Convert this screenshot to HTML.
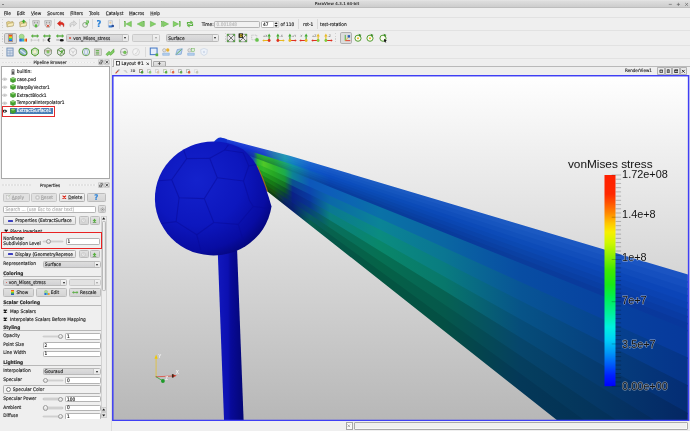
<!DOCTYPE html><html><head><meta charset="utf-8"><title>ParaView 4.3.1 64-bit</title><style>
*{box-sizing:border-box}
html,body{margin:0;padding:0}
body{width:690px;height:431px;overflow:hidden;background:#efefef;position:relative;
 font-family:"DejaVu Sans","Liberation Sans",sans-serif;font-size:4.3px;color:#262626;line-height:5px}
.a{position:absolute}
.t{position:absolute;white-space:nowrap;line-height:5px;height:5px;-webkit-text-stroke:0.14px currentColor;transform:scaleY(1.12);transform-origin:0 58%}
u{text-decoration:none;background:linear-gradient(#555,#555) no-repeat 0 4.45px / 100% 0.3px}
.b{font-weight:bold}
.hl{position:absolute;left:0;width:690px;height:1px;background:#fafafa;border-top:0.4px solid #e2e2e2}
.btn{position:absolute;border:0.5px solid #b2b2b2;border-radius:1.3px;background:linear-gradient(#f5f5f5,#e4e4e4)}
.btn.d{background:#e1e1e1;border-color:#c6c6c6}
.btn.g{background:linear-gradient(#e0e0e0,#d4d4d4);border-color:#bcbcbc}
.inp{position:absolute;border:1px solid #b4b4b4;border-radius:1.2px;background:#fff}
.cmb{position:absolute;border:1px solid #bababa;border-radius:1.4px;background:linear-gradient(#dddddd,#d2d2d4);overflow:hidden}
.cmb i{position:absolute;right:1.6px;z-index:1;top:50%;margin-top:-0.9px;border-left:1.6px solid transparent;border-right:1.6px solid transparent;border-top:2px solid #1c1c1c}
.cmb b{position:absolute;right:0;top:0;bottom:0;width:6.2px;background:linear-gradient(#f2f2f2,#e6e6e6);border-left:1px solid #c8c8c8}
.sl{position:absolute;height:1.6px;background:#cfcfcf;border-radius:1px;box-shadow:0 0 0 0.3px #b8b8b8}
.kn{position:absolute;width:5px;height:5.2px;border:1px solid #9c9c9c;border-radius:2.6px;background:linear-gradient(#fafafa,#d8d8d8)}
.ul{position:absolute;height:0.6px;background:#b8b8b8;left:3px;width:97.5px}
.cb{position:absolute;width:4.4px;height:4.4px}
</style></head><body><div id="w" style="position:absolute;left:0;top:0;width:690px;height:431px;will-change:transform">
<div class="a" style="left:0;top:0;width:690px;height:8.4px;background:linear-gradient(#e9e9e9 0,#dedede 12%,#cdcdcd 100%);border-bottom:0.5px solid #bdbdbd"></div>
<div class="t b" style="left:314.7px;top:1.7px;font-size:3.68px;color:#3c3c3c;-webkit-text-stroke:0">ParaView 4.3.1 64-bit</div>
<div class="a" style="left:2px;top:3.6px;border-left:1.2px solid transparent;border-right:1.2px solid transparent;border-top:1.5px solid #333"></div>
<svg class="a" style="left:666px;top:1px" width="24" height="7" viewBox="666 1 24 7"><path d="M668.8,4.4 h3 M676.8,4.4 h3.2 M678.4,2.8 v3.2 M685.2,3 L688,5.8 M688,3 L685.2,5.8" stroke="#5a5a5a" stroke-width="0.6" fill="none"/></svg>
<div class="t" style="left:3.7px;top:10.6px"><u>F</u>ile</div>
<div class="t" style="left:16.7px;top:10.6px"><u>E</u>dit</div>
<div class="t" style="left:31px;top:10.6px"><u>V</u>iew</div>
<div class="t" style="left:47.3px;top:10.6px"><u>S</u>ources</div>
<div class="t" style="left:70.2px;top:10.6px"><u>F</u>ilters</div>
<div class="t" style="left:89px;top:10.6px"><u>T</u>ools</div>
<div class="t" style="left:105.7px;top:10.6px"><u>C</u>atalyst</div>
<div class="t" style="left:129px;top:10.6px"><u>M</u>acros</div>
<div class="t" style="left:150.3px;top:10.6px"><u>H</u>elp</div>
<div class="hl" style="top:16.6px"></div>
<div class="hl" style="top:30.2px"></div>
<div class="hl" style="top:44.7px"></div>
<div class="hl" style="top:58.1px"></div>
<div class="a" style="left:1.6px;top:19.2px;width:1px;height:10.0px;background:repeating-linear-gradient(#d0d0d0 0,#d0d0d0 0.7px,transparent 0.7px,transparent 1.6px)"></div>
<div class="a" style="left:1.6px;top:33.2px;width:1px;height:10.0px;background:repeating-linear-gradient(#d0d0d0 0,#d0d0d0 0.7px,transparent 0.7px,transparent 1.6px)"></div>
<div class="a" style="left:1.6px;top:47.2px;width:1px;height:10.0px;background:repeating-linear-gradient(#d0d0d0 0,#d0d0d0 0.7px,transparent 0.7px,transparent 1.6px)"></div>
<svg class="a" style="left:5.40px;top:19.20px;overflow:visible" width="10" height="10" viewBox="-5.0 -5.0 10 10"><g transform="scale(1.1)"><path d="M-3.2,-1.6 L-1.2,-2.4 L0.2,-1.8 L2.6,-2.2 L3,1.6 L-2.6,2.6 Z" fill="#e8d38a" stroke="#9a8a55" stroke-width="0.45"/><path d="M-2.8,2.5 L-1.6,-0.4 L3.6,-1.2 L2.8,1.7 Z" fill="#f7ecbb" stroke="#a89860" stroke-width="0.4"/></g></svg>
<svg class="a" style="left:17.60px;top:19.20px;overflow:visible" width="10" height="10" viewBox="-5.0 -5.0 10 10"><g transform="scale(1.1)"><path d="M-3.2,-1.6 L-1.2,-2.4 L0.2,-1.8 L2.6,-2.2 L3,1.6 L-2.6,2.6 Z" fill="#e8d38a" stroke="#9a8a55" stroke-width="0.45"/><path d="M-2.8,2.5 L-1.6,-0.4 L3.6,-1.2 L2.8,1.7 Z" fill="#f7ecbb" stroke="#a89860" stroke-width="0.4"/><path d="M0.6,-4.2 L2.6,-2 L1.3,-2 L1.3,-0.6 L-0.1,-0.6 L-0.1,-2 L-1.4,-2 Z" fill="#3faa2c"/></g></svg>
<div class="a" style="left:28.8px;top:19.2px;width:0.5px;height:10.0px;background:#dadada"></div>
<svg class="a" style="left:30.60px;top:19.20px;overflow:visible" width="10" height="10" viewBox="-5.0 -5.0 10 10"><g transform="scale(1.1)"><path d="M-3,-3 L3,-3 L2.6,1.4 L0,3.4 L-2.6,1.4 Z" fill="#e3e3e3" stroke="#8a8a8a" stroke-width="0.5"/><path d="M-1.8,-2 h1.2 v1.6 h-1.2z M0.6,-2 h1.2 v1.6 h-1.2z" fill="#9d9d9d"/><circle cx="0" cy="1.6" r="1.3" fill="#55b83a"/></g></svg>
<svg class="a" style="left:43.00px;top:19.20px;overflow:visible" width="10" height="10" viewBox="-5.0 -5.0 10 10"><g transform="scale(1.1)"><path d="M-3,-3 L3,-3 L2.6,1.4 L0,3.4 L-2.6,1.4 Z" fill="#e3e3e3" stroke="#8a8a8a" stroke-width="0.5"/><path d="M-1.8,-2 h1.2 v1.6 h-1.2z M0.6,-2 h1.2 v1.6 h-1.2z" fill="#9d9d9d"/><path d="M-1.3,0.6 L1.3,2.8 M1.3,0.6 L-1.3,2.8" stroke="#d8391f" stroke-width="0.8"/></g></svg>
<div class="a" style="left:54.2px;top:19.2px;width:0.5px;height:10.0px;background:#dadada"></div>
<svg class="a" style="left:55.50px;top:19.20px;overflow:visible" width="10" height="10" viewBox="-5.0 -5.0 10 10"><g transform="scale(1.1)"><path d="M-3.4,-0.4 L-0.6,-3 L-0.6,-1.6 C2.6,-2 3.6,0.6 2.2,2.8 C2.4,1 1.4,0.2 -0.6,0.6 L-0.6,2 Z" fill="#e0281c" stroke="#a81a12" stroke-width="0.3"/></g></svg>
<svg class="a" style="left:67.70px;top:19.20px;overflow:visible" width="10" height="10" viewBox="-5.0 -5.0 10 10"><g transform="scale(1.1)"><path d="M3.4,-0.4 L0.6,-3 L0.6,-1.6 C-2.6,-2 -3.6,0.6 -2.2,2.8 C-2.4,1 -1.4,0.2 0.6,0.6 L0.6,2 Z" fill="#dcdcdc" stroke="#a9a9a9" stroke-width="0.4"/></g></svg>
<div class="a" style="left:79px;top:19.2px;width:0.5px;height:10.0px;background:#dadada"></div>
<svg class="a" style="left:80.80px;top:19.20px;overflow:visible" width="10" height="10" viewBox="-5.0 -5.0 10 10"><g transform="scale(1.1)"><circle cx="-0.8" cy="0.8" r="2.2" fill="none" stroke="#7d8f74" stroke-width="0.7"/><path d="M0,-3.2 h2.6 v2.6 h-1 v-1.6 h-1.6z" fill="#4fb23a"/><path d="M-0.4,-1.4 h2 v2 h-2z" fill="#58b944"/></g></svg>
<div class="a" style="left:92.2px;top:19.2px;width:0.5px;height:10.0px;background:#dadada"></div>
<div class="t b" style="left:96.6px;top:20.0px;font-size:8.4px;line-height:8.4px;height:8.4px;color:#2d82d6">?</div>
<svg class="a" style="left:105.70px;top:19.20px;overflow:visible" width="10" height="10" viewBox="-5.0 -5.0 10 10"><g transform="scale(1.1)"><path d="M-2.4,-3 h3.6 v4.6 h-3.6z" fill="#e8eef6" stroke="#8d9bb0" stroke-width="0.4"/><circle cx="-0.6" cy="-1.2" r="1" fill="#e7c89a"/><path d="M-2.2,1.4 h3.2 v1.8 h-3.2z" fill="#3f7fd0"/><circle cx="1.6" cy="1.8" r="1.2" fill="#2b4f9b"/></g></svg>
<div class="a" style="left:119.4px;top:19.2px;width:0.5px;height:10.0px;background:#dadada"></div>
<svg class="a" style="left:123.40px;top:19.20px;overflow:visible" width="10" height="10" viewBox="-5.0 -5.0 10 10"><g transform="scale(1)"><rect x="-3.55" y="-2.7" width="1.1" height="5.4" fill="#86d268" stroke="#4a9e32" stroke-width="0.35"/><path d="M3.4,-2.7 L-2,0 L3.4,2.7 Z" fill="#86d268" stroke="#4a9e32" stroke-width="0.4"/></g></svg>
<svg class="a" style="left:136.40px;top:19.20px;overflow:visible" width="10" height="10" viewBox="-5.0 -5.0 10 10"><g transform="scale(1)"><path d="M1.6,-2.7 L-3.8,0 L1.6,2.7 Z" fill="#86d268" stroke="#4a9e32" stroke-width="0.4"/><rect x="2.25" y="-2.7" width="1.1" height="5.4" fill="#86d268" stroke="#4a9e32" stroke-width="0.35"/></g></svg>
<svg class="a" style="left:148.10px;top:19.20px;overflow:visible" width="10" height="10" viewBox="-5.0 -5.0 10 10"><g transform="scale(1)"><path d="M-2.6,-2.7 L2.8,0 L-2.6,2.7 Z" fill="#86d268" stroke="#4a9e32" stroke-width="0.4"/></g></svg>
<svg class="a" style="left:160.20px;top:19.20px;overflow:visible" width="10" height="10" viewBox="-5.0 -5.0 10 10"><g transform="scale(1)"><rect x="-3.55" y="-2.7" width="1.1" height="5.4" fill="#86d268" stroke="#4a9e32" stroke-width="0.35"/><path d="M-1.8,-2.7 L3.6,0 L-1.8,2.7 Z" fill="#86d268" stroke="#4a9e32" stroke-width="0.4"/></g></svg>
<svg class="a" style="left:172.40px;top:19.20px;overflow:visible" width="10" height="10" viewBox="-5.0 -5.0 10 10"><g transform="scale(1)"><path d="M-3.8,-2.7 L1.6,0 L-3.8,2.7 Z" fill="#86d268" stroke="#4a9e32" stroke-width="0.4"/><rect x="2.25" y="-2.7" width="1.1" height="5.4" fill="#86d268" stroke="#4a9e32" stroke-width="0.35"/></g></svg>
<svg class="a" style="left:184.60px;top:19.20px;overflow:visible" width="10" height="10" viewBox="-5.0 -5.0 10 10"><g transform="scale(1)"><path d="M-2.5,0.6 V-1.5 H0.8 M2.5,-0.6 V1.5 H-0.8" fill="none" stroke="#5cb244" stroke-width="1.2"/><path d="M0.6,-3.2 L3,-1.5 L0.6,0.2Z M-0.6,3.2 L-3,1.5 L-0.6,-0.2Z" fill="#6cc24e" stroke="#4a9e32" stroke-width="0.3"/></g></svg>
<div class="t" style="left:201.7px;top:21.599999999999998px">Time:</div>
<div class="inp" style="left:214.3px;top:20.6px;width:45.4px;height:7px;background:#f1f1f1;border-color:#b4b4b4"></div>
<div class="t" style="left:216.6px;top:21.599999999999998px;color:#b9b9b9">0.001848</div>
<div class="inp" style="left:260.9px;top:20.6px;width:18.6px;height:7px"></div>
<div class="t" style="left:263px;top:21.599999999999998px">47</div>
<svg class="a" style="left:273.4px;top:20.6px" width="6.2" height="7" viewBox="0 0 6.2 7"><rect x="0.3" y="0.3" width="5.6" height="6.4" rx="1" fill="#ececec" stroke="#b9b9b9" stroke-width="0.5"/><path d="M3.1,1.2 L4.7,3 L1.5,3Z M3.1,5.9 L4.7,4.1 L1.5,4.1Z" fill="#1a1a1a"/></svg>
<div class="a" style="left:297.6px;top:19.2px;width:0.5px;height:10.0px;background:#dadada"></div>
<div class="a" style="left:316.5px;top:19.2px;width:0.5px;height:10.0px;background:#dadada"></div>
<div class="t" style="left:280.6px;top:21.599999999999998px">of 110</div>
<div class="t" style="left:303px;top:21.599999999999998px">rot-1</div>
<div class="t" style="left:320px;top:21.599999999999998px">test-rotation</div>
<div class="a" style="left:4.2px;top:32.6px;width:12.5px;height:11.2px;border:0.5px solid #b0b0b0;border-radius:1.8px;background:#dcdcdc"></div>
<div class="a" style="left:7.6px;top:34px;width:5.8px;height:8.4px;border:0.3px solid #b09a8a;background:linear-gradient(#ee2a1a 0,#f27a1a 18%,#f4e020 36%,#58d040 54%,#22bce0 72%,#2248e0 100%)"></div>
<svg class="a" style="left:17.60px;top:33.20px;overflow:visible" width="10" height="10" viewBox="-5.0 -5.0 10 10"><g transform="scale(1.1)"><circle cx="-1.2" cy="-1.2" r="2.3" fill="#a6dc8e" stroke="#6faa5a" stroke-width="0.4"/><rect x="-3.4" y="0.6" width="2.4" height="2.6" fill="#2a6fd6"/><rect x="-1" y="0.6" width="2.2" height="2.6" fill="#36b0c8"/><rect x="1.2" y="0.6" width="2.2" height="2.6" fill="#f0a028"/><rect x="2.6" y="0.6" width="1" height="2.6" fill="#e03a20"/></g></svg>
<svg class="a" style="left:29.80px;top:33.20px;overflow:visible" width="10" height="10" viewBox="-5.0 -5.0 10 10"><g transform="scale(1.1)"><path d="M-3.6,-1.8 L-1.8,-3.2 L-1.8,-2.3 L1.8,-2.3 L1.8,-3.2 L3.6,-1.8 L1.8,-0.4 L1.8,-1.3 L-1.8,-1.3 L-1.8,-0.4 Z" fill="#5cb940" stroke="#3c8a27" stroke-width="0.25"/><path d="M-3.4,0.8 v2.4 M3.4,0.8 v2.4 M-2.4,2 h1 M-0.6,2 h1.2 M1.4,2 h1" stroke="#8c8c8c" stroke-width="0.5" fill="none"/></g></svg>
<svg class="a" style="left:42.30px;top:33.20px;overflow:visible" width="10" height="10" viewBox="-5.0 -5.0 10 10"><g transform="scale(1.1)"><path d="M-3.6,-1.8 L-1.8,-3.2 L-1.8,-2.3 L1.8,-2.3 L1.8,-3.2 L3.6,-1.8 L1.8,-0.4 L1.8,-1.3 L-1.8,-1.3 L-1.8,-0.4 Z" fill="#5cb940" stroke="#3c8a27" stroke-width="0.25"/><path d="M-3.4,0.8 v2.4 M-2.4,2 h1" stroke="#8c8c8c" stroke-width="0.5" fill="none"/><path d="M3,0 C0.4,0.2 0,3 2.6,3.4 C1.4,2.6 1.6,1 3,0Z" fill="#111" stroke="#111" stroke-width="0.7"/></g></svg>
<svg class="a" style="left:54.90px;top:33.20px;overflow:visible" width="10" height="10" viewBox="-5.0 -5.0 10 10"><g transform="scale(1.1)"><path d="M-3.6,-1.8 L-1.8,-3.2 L-1.8,-2.3 L1.8,-2.3 L1.8,-3.2 L3.6,-1.8 L1.8,-0.4 L1.8,-1.3 L-1.8,-1.3 L-1.8,-0.4 Z" fill="#5cb940" stroke="#3c8a27" stroke-width="0.25"/><path d="M-3.4,1.8 h3" stroke="#555" stroke-width="0.5"/><ellipse cx="1.6" cy="2" rx="1.9" ry="1.2" fill="#161616"/></g></svg>
<div class="cmb" style="left:65.7px;top:33.6px;width:63.4px;height:8.8px"><b></b><i></i></div>
<div class="a" style="left:69.3px;top:37.300000000000004px;width:1.8px;height:1.8px;border-radius:1px;background:#d64a3a"></div>
<div class="t" style="left:73.2px;top:35.6px">von_Mises_stress</div>
<div class="cmb" style="left:131.7px;top:33.6px;width:27.9px;height:8.8px;border-color:#cacaca;background:#e2e2e2"><b></b><i style="border-top-color:#999"></i></div>
<div class="cmb" style="left:165.7px;top:33.6px;width:53.3px;height:8.8px"><b></b><i></i></div>
<div class="t" style="left:168.2px;top:35.6px">Surface</div>
<div class="a" style="left:225.2px;top:33.2px;width:1px;height:10.0px;background:repeating-linear-gradient(#d0d0d0 0,#d0d0d0 0.7px,transparent 0.7px,transparent 1.6px)"></div>
<svg class="a" style="left:225.80px;top:33.20px;overflow:visible" width="10" height="10" viewBox="-5.0 -5.0 10 10"><g transform="scale(1.2)"><rect x="-3.2" y="-3.2" width="6.4" height="6.4" fill="#e9e9e9" stroke="#7c7c7c" stroke-width="0.5"/><path d="M-3,-3 L3,3 M3,-3 L-3,3" stroke="#3a3a3a" stroke-width="0.55"/><path d="M-3,-3 h1.6 M-3,-3 v1.6 M3,3 h-1.6 M3,3 v-1.6 M3,-3 h-1.6 M3,-3 v1.6 M-3,3 h1.6 M-3,3 v-1.6" stroke="#4aa535" stroke-width="0.7"/></g></svg>
<svg class="a" style="left:238.00px;top:33.20px;overflow:visible" width="10" height="10" viewBox="-5.0 -5.0 10 10"><g transform="scale(1.2)"><rect x="-3.2" y="-3.2" width="6.4" height="6.4" fill="#e9e9e9" stroke="#7c7c7c" stroke-width="0.5"/><path d="M-3,-3 L3,3 M3,-3 L-3,3" stroke="#3a3a3a" stroke-width="0.55"/><path d="M-3,-3 h1.6 M-3,-3 v1.6 M3,3 h-1.6 M3,3 v-1.6 M3,-3 h-1.6 M3,-3 v1.6 M-3,3 h1.6 M-3,3 v-1.6" stroke="#4aa535" stroke-width="0.7"/><rect x="-3.6" y="-3.8" width="3.6" height="3.6" fill="#111"/><text x="-3" y="-0.9" font-size="3.2" font-weight="bold" fill="#f2d030" font-family="DejaVu Sans,sans-serif">D</text></g></svg>
<svg class="a" style="left:250.30px;top:33.20px;overflow:visible" width="10" height="10" viewBox="-5.0 -5.0 10 10"><g transform="scale(1.1)"><rect x="-3" y="-2.6" width="4.6" height="4.2" fill="none" stroke="#9c9c9c" stroke-width="0.45" stroke-dasharray="0.9 0.6"/><circle cx="1.8" cy="1.8" r="1.7" fill="#67c24d"/></g></svg>
<svg class="a" style="left:262.30px;top:33.20px;overflow:visible" width="10" height="10" viewBox="-5.0 -5.0 10 10"><g transform="scale(1.25)"><path d="M1.7,2 L1.7,-1.4" stroke="#3fa82c" stroke-width="0.9"/><path d="M1.7,-3.6 L3.0,-1.2 L0.3999999999999999,-1.2Z" fill="#3fa82c"/><path d="M1.7,2 L-2.5999999999999996,2" stroke="#e8b820" stroke-width="0.8"/><path d="M-3.8,2 L-2.3,1 L-2.3,3Z" fill="#e8b820"/><circle cx="1.7" cy="2" r="1.15" fill="#e03020"/><text x="-3.4" y="-1.2" font-size="2.5" fill="#555" font-family="DejaVu Sans,sans-serif">+X</text></g></svg>
<svg class="a" style="left:274.70px;top:33.20px;overflow:visible" width="10" height="10" viewBox="-5.0 -5.0 10 10"><g transform="scale(1.25)"><path d="M-1.7,2 L-1.7,-1.4" stroke="#3fa82c" stroke-width="0.9"/><path d="M-1.7,-3.6 L-0.3999999999999999,-1.2 L-3.0,-1.2Z" fill="#3fa82c"/><path d="M-1.7,2 L2.5999999999999996,2" stroke="#e8b820" stroke-width="0.8"/><path d="M3.8,2 L2.3,1 L2.3,3Z" fill="#e8b820"/><circle cx="-1.7" cy="2" r="1.15" fill="#e03020"/><text x="-0.2" y="-1.2" font-size="2.5" fill="#555" font-family="DejaVu Sans,sans-serif">-X</text></g></svg>
<svg class="a" style="left:286.70px;top:33.20px;overflow:visible" width="10" height="10" viewBox="-5.0 -5.0 10 10"><g transform="scale(1.25)"><path d="M-1.7,2 L-1.7,-1.4" stroke="#3fa82c" stroke-width="0.9"/><path d="M-1.7,-3.6 L-0.3999999999999999,-1.2 L-3.0,-1.2Z" fill="#3fa82c"/><path d="M-1.7,2 L2.5999999999999996,2" stroke="#e03020" stroke-width="0.8"/><path d="M3.8,2 L2.3,1 L2.3,3Z" fill="#e03020"/><circle cx="-1.7" cy="2" r="1.15" fill="#e8b820"/><text x="-0.2" y="-1.2" font-size="2.5" fill="#555" font-family="DejaVu Sans,sans-serif">+Y</text></g></svg>
<svg class="a" style="left:299.00px;top:33.20px;overflow:visible" width="10" height="10" viewBox="-5.0 -5.0 10 10"><g transform="scale(1.25)"><path d="M1.7,2 L1.7,-1.4" stroke="#3fa82c" stroke-width="0.9"/><path d="M1.7,-3.6 L3.0,-1.2 L0.3999999999999999,-1.2Z" fill="#3fa82c"/><path d="M1.7,2 L-2.5999999999999996,2" stroke="#e03020" stroke-width="0.8"/><path d="M-3.8,2 L-2.3,1 L-2.3,3Z" fill="#e03020"/><circle cx="1.7" cy="2" r="1.15" fill="#e8b820"/><text x="-3.4" y="-1.2" font-size="2.5" fill="#555" font-family="DejaVu Sans,sans-serif">-Y</text></g></svg>
<svg class="a" style="left:311.20px;top:33.20px;overflow:visible" width="10" height="10" viewBox="-5.0 -5.0 10 10"><g transform="scale(1.25)"><path d="M1.7,2 L1.7,-1.4" stroke="#e8b820" stroke-width="0.9"/><path d="M1.7,-3.6 L3.0,-1.2 L0.3999999999999999,-1.2Z" fill="#e8b820"/><path d="M1.7,2 L-2.5999999999999996,2" stroke="#e03020" stroke-width="0.8"/><path d="M-3.8,2 L-2.3,1 L-2.3,3Z" fill="#e03020"/><circle cx="1.7" cy="2" r="1.15" fill="#7ccc3c"/><text x="-3.4" y="-1.2" font-size="2.5" fill="#555" font-family="DejaVu Sans,sans-serif">+Z</text></g></svg>
<svg class="a" style="left:323.30px;top:33.20px;overflow:visible" width="10" height="10" viewBox="-5.0 -5.0 10 10"><g transform="scale(1.25)"><path d="M-1.7,2 L-1.7,-1.4" stroke="#e8b820" stroke-width="0.9"/><path d="M-1.7,-3.6 L-0.3999999999999999,-1.2 L-3.0,-1.2Z" fill="#e8b820"/><path d="M-1.7,2 L2.5999999999999996,2" stroke="#e03020" stroke-width="0.8"/><path d="M3.8,2 L2.3,1 L2.3,3Z" fill="#e03020"/><circle cx="-1.7" cy="2" r="1.15" fill="#7ccc3c"/><text x="-0.2" y="-1.2" font-size="2.5" fill="#555" font-family="DejaVu Sans,sans-serif">-Z</text></g></svg>
<div class="a" style="left:335.4px;top:33.2px;width:1px;height:10.0px;background:repeating-linear-gradient(#d0d0d0 0,#d0d0d0 0.7px,transparent 0.7px,transparent 1.6px)"></div>
<div class="a" style="left:340.4px;top:32.4px;width:11.3px;height:11.4px;border:0.5px solid #b0b0b0;border-radius:1.8px;background:#dcdcdc"></div>
<svg class="a" style="left:341.50px;top:33.20px;overflow:visible" width="10" height="10" viewBox="-5.0 -5.0 10 10"><g transform="scale(1.1)"><path d="M-1.6,2.4 L-1.6,-2.8" stroke="#3fa82c" stroke-width="0.8"/><path d="M-1.6,2.4 L3,2.4" stroke="#e03020" stroke-width="0.8"/><path d="M-1.6,2.4 L1.4,-0.8" stroke="#e8b820" stroke-width="0.8"/><rect x="0.6" y="-2.6" width="2.2" height="2.2" fill="#2c5fb8"/></g></svg>
<svg class="a" style="left:353.30px;top:33.20px;overflow:visible" width="10" height="10" viewBox="-5.0 -5.0 10 10"><g transform="scale(1.1)"><circle cx="0" cy="0.2" r="2.8" fill="#fbfbf0" stroke="#4f9a2e" stroke-width="0.9"/><circle cx="0" cy="0.2" r="0.9" fill="#e8b820"/><path d="M0.6,-3.8 L3.2,-2.8 L1.2,-1.2Z" fill="#3c8a27"/></g></svg>
<svg class="a" style="left:365.30px;top:33.20px;overflow:visible" width="10" height="10" viewBox="-5.0 -5.0 10 10"><g transform="scale(1.1)"><circle cx="0" cy="0.2" r="2.8" fill="#fbfbf0" stroke="#4f9a2e" stroke-width="0.9"/><circle cx="0" cy="0.2" r="0.9" fill="#e8b820"/><path d="M0.6,-3.8 L3.2,-2.8 L1.2,-1.2Z" fill="#3c8a27"/></g></svg>
<svg class="a" style="left:377.70px;top:33.20px;overflow:visible" width="10" height="10" viewBox="-5.0 -5.0 10 10"><g transform="scale(1.1)"><circle cx="0" cy="0.2" r="2.8" fill="#fbfbf0" stroke="#4f9a2e" stroke-width="0.9"/><path d="M0.6,-3.8 L3.2,-2.8 L1.2,-1.2Z" fill="#3c8a27"/><path d="M1,0.6 L3.6,2.6 L2.4,2.8 L3,4 L2.2,4.2 L1.7,3.1 L1,3.8Z" fill="#111"/></g></svg>
<svg class="a" style="left:5.40px;top:47.20px;overflow:visible" width="10" height="10" viewBox="-5.0 -5.0 10 10"><g transform="scale(1.1)"><rect x="-2.8" y="-3.6" width="5.6" height="7.2" fill="#d2dcea" stroke="#6f8db4" stroke-width="0.8"/><path d="M-2.6,-1.4 h5.2 M0,-1.4 v4.8 M-2.6,1 h5.2" stroke="#7f9cc0" stroke-width="0.5"/></g></svg>
<svg class="a" style="left:17.90px;top:47.20px;overflow:visible" width="10" height="10" viewBox="-5.0 -5.0 10 10"><g transform="scale(1.1)"><ellipse cx="0" cy="0" rx="3.9" ry="2.9" transform="rotate(35)" fill="#8bb0c8" stroke="#4f9a2e" stroke-width="1.1"/><path d="M-2.4,-1.8 L2.4,1.8" stroke="#d8e6f0" stroke-width="1.2"/></g></svg>
<svg class="a" style="left:30.30px;top:47.20px;overflow:visible" width="10" height="10" viewBox="-5.0 -5.0 10 10"><g transform="scale(1.1)"><path d="M0,-3.7 L3.2,-2 L3,1.8 L0,3.7 L-3,1.8 L-3.2,-2Z" fill="#d4e6cc" stroke="#4f9a2e" stroke-width="0.9"/><path d="M-3,-1.9 L0,-0.4 L3,-1.9 M0,-0.4 V3.5" stroke="#4f9a2e" stroke-width="0.4" fill="none" opacity="0.7"/><rect x="-1.4" y="-1.4" width="2.4" height="2.6" fill="#f5f1c8"/></g></svg>
<svg class="a" style="left:43.00px;top:47.20px;overflow:visible" width="10" height="10" viewBox="-5.0 -5.0 10 10"><g transform="scale(1.1)"><path d="M0,-3.7 L3.2,-2 L3,1.8 L0,3.7 L-3,1.8 L-3.2,-2Z" fill="#e4e4e4" stroke="#8a9a86" stroke-width="0.9"/><path d="M-3,-1.9 L0,-0.4 L3,-1.9 M0,-0.4 V3.5" stroke="#8a9a86" stroke-width="0.4" fill="none" opacity="0.7"/><rect x="-1.3" y="-1.6" width="2.6" height="2.8" fill="#7cc862"/><path d="M-3,-1 h6" stroke="#b06a50" stroke-width="0.4"/></g></svg>
<svg class="a" style="left:55.50px;top:47.20px;overflow:visible" width="10" height="10" viewBox="-5.0 -5.0 10 10"><g transform="scale(1.1)"><path d="M0,-3.7 L3.2,-2 L3,1.8 L0,3.7 L-3,1.8 L-3.2,-2Z" fill="#e9e9e9" stroke="#6a8a5c" stroke-width="0.9"/><path d="M-3,-1.9 L0,-0.4 L3,-1.9 M0,-0.4 V3.5" stroke="#6a8a5c" stroke-width="0.4" fill="none" opacity="0.7"/><path d="M-2.6,-2 L2.4,1.6 M2.6,-2.2 L-1,2.6" stroke="#4f9a2e" stroke-width="0.8"/><circle cx="0.8" cy="-0.6" r="1" fill="#58b040"/></g></svg>
<svg class="a" style="left:68.00px;top:47.20px;overflow:visible" width="10" height="10" viewBox="-5.0 -5.0 10 10"><g transform="scale(1.1)"><path d="M0,-3.7 L3.2,-2 L3,1.8 L0,3.7 L-3,1.8 L-3.2,-2Z" fill="#f3f3f3" stroke="#bdbdbd" stroke-width="0.9"/><path d="M-3,-1.9 L0,-0.4 L3,-1.9 M0,-0.4 V3.5" stroke="#bdbdbd" stroke-width="0.4" fill="none" opacity="0.7"/><path d="M-1.4,-1 L0,1 L1.4,-1" stroke="#c2c2c2" stroke-width="0.5" fill="none"/></g></svg>
<svg class="a" style="left:80.80px;top:47.20px;overflow:visible" width="10" height="10" viewBox="-5.0 -5.0 10 10"><g transform="scale(1.1)"><ellipse cx="0" cy="0" rx="3.3" ry="3.4" fill="#dfe7f3" stroke="#5c9a46" stroke-width="0.8"/><ellipse cx="0" cy="0" rx="1.2" ry="2.8" fill="#f8f8f8" stroke="#6b8fc0" stroke-width="0.5"/></g></svg>
<svg class="a" style="left:93.20px;top:47.20px;overflow:visible" width="10" height="10" viewBox="-5.0 -5.0 10 10"><g transform="scale(1.1)"><rect x="-3" y="-2.8" width="6" height="5.8" fill="#d8d8d4" stroke="#9a9a92" stroke-width="0.5"/><path d="M-2,-1.4 h3 M-2,0.2 h3 M-2,1.8 h3" stroke="#58a840" stroke-width="0.8"/></g></svg>
<svg class="a" style="left:105.40px;top:47.20px;overflow:visible" width="10" height="10" viewBox="-5.0 -5.0 10 10"><g transform="scale(1.1)"><path d="M-3.6,2 L-1,-0.6 L0.6,0.4 L3.4,-2.8 L3.8,0 L0.8,3 L-0.8,2 L-2.4,3.4Z" fill="#7ccc62" stroke="#4f9a2e" stroke-width="0.5"/></g></svg>
<svg class="a" style="left:118.90px;top:47.20px;overflow:visible" width="10" height="10" viewBox="-5.0 -5.0 10 10"><g transform="scale(1.1)"><circle cx="0" cy="0" r="3.3" fill="#f1f1f1" stroke="#8c8c8c" stroke-width="0.6"/><circle cx="0.8" cy="0.4" r="1.3" fill="#74c858" stroke="#4f9a2e" stroke-width="0.4"/><path d="M-3,0 h2.4" stroke="#8c8c8c" stroke-width="0.5"/></g></svg>
<svg class="a" style="left:131.00px;top:47.20px;overflow:visible" width="10" height="10" viewBox="-5.0 -5.0 10 10"><g transform="scale(1.1)"><circle cx="0" cy="0" r="3.1" fill="#f4f4f4" stroke="#c6c6c6" stroke-width="0.6"/><path d="M-1,1.6 C0.6,1.6 1.6,0 1.2,-1.6" stroke="#c6c6c6" stroke-width="0.6" fill="none"/></g></svg>
<div class="a" style="left:144.6px;top:47.2px;width:0.5px;height:10.0px;background:#dadada"></div>
<svg class="a" style="left:148.50px;top:47.20px;overflow:visible" width="10" height="10" viewBox="-5.0 -5.0 10 10"><g transform="scale(1.1)"><rect x="-3.4" y="-3.6" width="6.2" height="6" fill="#e6eef9" stroke="#3f74c4" stroke-width="0.9"/><rect x="1.4" y="1.4" width="2.4" height="2.4" fill="#58b040"/></g></svg>
<svg class="a" style="left:161.20px;top:47.20px;overflow:visible" width="10" height="10" viewBox="-5.0 -5.0 10 10"><g transform="scale(1.1)"><circle cx="-1.6" cy="-1.6" r="1.5" fill="#e2e2e2" stroke="#8d8d8d" stroke-width="0.4"/><circle cx="1.6" cy="-1.8" r="1.5" fill="#e8b030"/><path d="M-3,1 h6 v2 h-6z" fill="#b8d2ee" stroke="#6b9ad0" stroke-width="0.4"/></g></svg>
<svg class="a" style="left:174.00px;top:47.20px;overflow:visible" width="10" height="10" viewBox="-5.0 -5.0 10 10"><g transform="scale(1.1)"><path d="M-3,2.6 L-1.6,-2.2 L3,-3 L2,2 Z" fill="#b8d2ee" stroke="#5b8ac8" stroke-width="0.5"/><path d="M-2.4,2 L2.4,-2.4" stroke="#58a840" stroke-width="0.7"/></g></svg>
<svg class="a" style="left:186.40px;top:47.20px;overflow:visible" width="10" height="10" viewBox="-5.0 -5.0 10 10"><g transform="scale(1.1)"><circle cx="-1.4" cy="-1.6" r="1.5" fill="#e2e2e2" stroke="#8d8d8d" stroke-width="0.4"/><rect x="0.4" y="-3" width="2.6" height="2.6" fill="#dfeedd" stroke="#58a840" stroke-width="0.4"/><path d="M-3,1 h6 v2 h-6z" fill="#b8d2ee" stroke="#6b9ad0" stroke-width="0.4"/></g></svg>
<svg class="a" style="left:198.90px;top:47.20px;overflow:visible" width="10" height="10" viewBox="-5.0 -5.0 10 10"><g transform="scale(1.1)"><path d="M-3,-2.2 L0,-3.2 L3,-2.2 L2.6,1.6 L0,3.2 L-2.6,1.6Z" fill="#eef3fa" stroke="#c4d0e2" stroke-width="0.6"/><circle cx="0" cy="0" r="1.1" fill="#d2dcec"/></g></svg>
<div class="t" style="left:0;width:100px;text-align:center;top:60.1px;color:#333;font-size:4px">Pipeline Browser</div>
<svg class="a" style="left:97.6px;top:59.4px" width="12" height="6.4" viewBox="0 0 12 6.4"><rect x="0.4" y="0.4" width="5" height="5.4" rx="0.8" fill="#e4e4e4" stroke="#9c9c9c" stroke-width="0.4"/><rect x="6.4" y="0.4" width="5" height="5.4" rx="0.8" fill="#e4e4e4" stroke="#9c9c9c" stroke-width="0.4"/><path d="M1.6,3 h2 v1.8 h-2z M2.4,1.6 h2 v1.8" fill="none" stroke="#222" stroke-width="0.55"/><path d="M7.6,1.7 L10.2,4.5 M10.2,1.7 L7.6,4.5" stroke="#222" stroke-width="0.7"/></svg>
<div class="a" style="left:1.4px;top:66.4px;width:108.4px;height:112.4px;background:#fff;border:0.5px solid #a8a8a8"></div>
<div class="a" style="left:9.8px;top:107.6px;width:43.6px;height:6.8px;background:#4a7db5"></div>
<div class="t" style="left:16.8px;top:69.1px;color:#262626">builtin:</div>
<svg class="a" style="left:11.2px;top:68.6px" width="4" height="6" viewBox="0 0 4 6"><rect x="0.6" y="0.3" width="2.8" height="5" rx="0.4" fill="#5a5a5a"/><rect x="1" y="0.9" width="2" height="0.8" fill="#d8d8d8"/><rect x="1" y="2.2" width="2" height="0.6" fill="#a8a8a8"/><rect x="0.2" y="5.2" width="3.6" height="0.6" fill="#777"/></svg>
<div class="t" style="left:16.8px;top:77.0px;color:#262626">case.pvd</div>
<svg class="a" style="left:10.4px;top:76.5px" width="6" height="6" viewBox="0 0 6 6"><path d="M0.5,1.6 L3,0.4 L5.5,1.6 L5.5,4.4 L3,5.6 L0.5,4.4Z" fill="#49a832" stroke="#2f7a1e" stroke-width="0.4"/><path d="M0.5,1.6 L3,2.8 L5.5,1.6 M3,2.8 V5.6" stroke="#2f7a1e" stroke-width="0.35" fill="none"/><path d="M0.5,1.6 L3,0.4 L5.5,1.6 L3,2.8Z" fill="#8fd676"/></svg>
<svg class="a" style="left:2.4px;top:77.3px" width="5.4" height="4.4" viewBox="0 0 5.4 4.4"><path d="M0.2,2.2 C1.4,0.6 4,0.6 5.2,2.2 C4,3.8 1.4,3.8 0.2,2.2Z" fill="#e2e2e2" stroke="#a4a4a4" stroke-width="0.4"/><circle cx="2.7" cy="2.2" r="0.8" fill="#b8b8b8"/></svg>
<div class="t" style="left:16.8px;top:84.8px;color:#262626">WarpByVector1</div>
<svg class="a" style="left:10.4px;top:84.3px" width="6" height="6" viewBox="0 0 6 6"><path d="M0.5,1.6 L3,0.4 L5.5,1.6 L5.5,4.4 L3,5.6 L0.5,4.4Z" fill="#49a832" stroke="#2f7a1e" stroke-width="0.4"/><path d="M0.5,1.6 L3,2.8 L5.5,1.6 M3,2.8 V5.6" stroke="#2f7a1e" stroke-width="0.35" fill="none"/><path d="M0.5,1.6 L3,0.4 L5.5,1.6 L3,2.8Z" fill="#8fd676"/></svg>
<svg class="a" style="left:2.4px;top:85.1px" width="5.4" height="4.4" viewBox="0 0 5.4 4.4"><path d="M0.2,2.2 C1.4,0.6 4,0.6 5.2,2.2 C4,3.8 1.4,3.8 0.2,2.2Z" fill="#e2e2e2" stroke="#a4a4a4" stroke-width="0.4"/><circle cx="2.7" cy="2.2" r="0.8" fill="#b8b8b8"/></svg>
<div class="t" style="left:16.8px;top:92.6px;color:#262626">ExtractBlock1</div>
<svg class="a" style="left:10.4px;top:92.1px" width="6" height="6" viewBox="0 0 6 6"><path d="M0.5,1.6 L3,0.4 L5.5,1.6 L5.5,4.4 L3,5.6 L0.5,4.4Z" fill="#49a832" stroke="#2f7a1e" stroke-width="0.4"/><path d="M0.5,1.6 L3,2.8 L5.5,1.6 M3,2.8 V5.6" stroke="#2f7a1e" stroke-width="0.35" fill="none"/><path d="M0.5,1.6 L3,0.4 L5.5,1.6 L3,2.8Z" fill="#8fd676"/></svg>
<svg class="a" style="left:2.4px;top:92.89999999999999px" width="5.4" height="4.4" viewBox="0 0 5.4 4.4"><path d="M0.2,2.2 C1.4,0.6 4,0.6 5.2,2.2 C4,3.8 1.4,3.8 0.2,2.2Z" fill="#e2e2e2" stroke="#a4a4a4" stroke-width="0.4"/><circle cx="2.7" cy="2.2" r="0.8" fill="#b8b8b8"/></svg>
<div class="t" style="left:16.8px;top:100.4px;color:#262626">TemporalInterpolator1</div>
<svg class="a" style="left:10.4px;top:99.9px" width="6" height="6" viewBox="0 0 6 6"><path d="M0.5,1.6 L3,0.4 L5.5,1.6 L5.5,4.4 L3,5.6 L0.5,4.4Z" fill="#49a832" stroke="#2f7a1e" stroke-width="0.4"/><path d="M0.5,1.6 L3,2.8 L5.5,1.6 M3,2.8 V5.6" stroke="#2f7a1e" stroke-width="0.35" fill="none"/><path d="M0.5,1.6 L3,0.4 L5.5,1.6 L3,2.8Z" fill="#8fd676"/></svg>
<svg class="a" style="left:2.4px;top:100.7px" width="5.4" height="4.4" viewBox="0 0 5.4 4.4"><path d="M0.2,2.2 C1.4,0.6 4,0.6 5.2,2.2 C4,3.8 1.4,3.8 0.2,2.2Z" fill="#e2e2e2" stroke="#a4a4a4" stroke-width="0.4"/><circle cx="2.7" cy="2.2" r="0.8" fill="#b8b8b8"/></svg>
<div class="t" style="left:16.8px;top:108.4px;color:#fff">ExtractSurface1</div>
<svg class="a" style="left:10.4px;top:107.9px" width="6" height="6" viewBox="0 0 6 6"><path d="M0.5,1.6 L3,0.4 L5.5,1.6 L5.5,4.4 L3,5.6 L0.5,4.4Z" fill="#49a832" stroke="#2f7a1e" stroke-width="0.4"/><path d="M0.5,1.6 L3,2.8 L5.5,1.6 M3,2.8 V5.6" stroke="#2f7a1e" stroke-width="0.35" fill="none"/><path d="M0.5,1.6 L3,0.4 L5.5,1.6 L3,2.8Z" fill="#8fd676"/></svg>
<svg class="a" style="left:2.4px;top:108.7px" width="5.4" height="4.4" viewBox="0 0 5.4 4.4"><path d="M0.2,2.2 C1.4,0.4 4,0.4 5.2,2.2 C4,4 1.4,4 0.2,2.2Z" fill="#222"/><circle cx="2.7" cy="2.2" r="0.8" fill="#eee"/></svg>
<div class="a" style="left:2px;top:105.6px;width:52.6px;height:11.2px;border:0.8px solid #e22b2b"></div>
<div class="t" style="left:0;width:100px;text-align:center;top:182.8px;color:#333;font-size:4px">Properties</div>
<svg class="a" style="left:97.6px;top:182.10000000000002px" width="12" height="6.4" viewBox="0 0 12 6.4"><rect x="0.4" y="0.4" width="5" height="5.4" rx="0.8" fill="#e4e4e4" stroke="#9c9c9c" stroke-width="0.4"/><rect x="6.4" y="0.4" width="5" height="5.4" rx="0.8" fill="#e4e4e4" stroke="#9c9c9c" stroke-width="0.4"/><path d="M1.6,3 h2 v1.8 h-2z M2.4,1.6 h2 v1.8" fill="none" stroke="#222" stroke-width="0.55"/><path d="M7.6,1.7 L10.2,4.5 M10.2,1.7 L7.6,4.5" stroke="#222" stroke-width="0.7"/></svg>
<div class="btn d" style="left:3.2px;top:192.7px;width:26.6px;height:8.9px"></div>
<div class="t" style="left:11.8px;top:194.55px;color:#a3a3a3"><u>A</u>pply</div>
<svg class="a" style="left:5.6px;top:194.4px" width="5.4" height="5.4" viewBox="0 0 5.4 5.4"><rect x="0.4" y="1.6" width="3.4" height="3.4" fill="#ececec" stroke="#b4b4b4" stroke-width="0.4"/><path d="M2,2.8 L4.8,0.4" stroke="#b8c8b0" stroke-width="0.7"/></svg>
<div class="btn d" style="left:31.1px;top:192.7px;width:26.3px;height:8.9px"></div>
<div class="t" style="left:41px;top:194.55px;color:#a3a3a3"><u>R</u>eset</div>
<svg class="a" style="left:34.6px;top:194.6px" width="5" height="5" viewBox="0 0 5 5"><circle cx="2.5" cy="2.5" r="2" fill="#d4d4d4" stroke="#b0b0b0" stroke-width="0.4"/><circle cx="2.5" cy="2.5" r="0.8" fill="#efefef"/></svg>
<div class="btn" style="left:58.7px;top:192.7px;width:26.3px;height:8.9px"></div>
<div class="t" style="left:68.2px;top:194.55px;color:#262626"><u>D</u>elete</div>
<svg class="a" style="left:62px;top:194.8px" width="4.6" height="4.6" viewBox="0 0 4.6 4.6"><path d="M0.6,0.6 L4,4 M4,0.6 L0.6,4" stroke="#dc2a1c" stroke-width="1.1"/></svg>
<div class="btn g" style="left:86.6px;top:192.7px;width:19.9px;height:8.9px"></div>
<div class="t b" style="left:94.2px;top:195px;font-size:7px;line-height:7.4px;height:7.4px;color:#2d82d6">?</div>
<div class="inp" style="left:3.2px;top:206px;width:93.3px;height:6.8px"></div>
<div class="t" style="left:5.4px;top:207.3px;color:#b4b4b4">Search ... (use Esc to clear text)</div>
<div class="btn g" style="left:97.6px;top:204.8px;width:8.9px;height:8.7px"></div>
<svg class="a" style="left:99.6px;top:206.6px" width="5" height="5" viewBox="0 0 5 5"><circle cx="2.5" cy="2.5" r="1.6" fill="none" stroke="#7c7c7c" stroke-width="0.7" stroke-dasharray="0.8 0.45"/><circle cx="2.5" cy="2.5" r="0.6" fill="#7c7c7c"/></svg>
<div class="a" style="left:101.2px;top:216px;width:5.5px;height:202.4px;background:#ededed;border:1px solid #d2d2d2"></div>
<div class="a" style="left:101.5px;top:221.4px;width:4.9px;height:69.2px;background:linear-gradient(90deg,#f8f8f8,#e2e2e2);border:1px solid #b9b9b9;border-radius:1.2px"></div>
<svg class="a" style="left:101.3px;top:216.4px" width="5.4" height="5" viewBox="0 0 5.4 5"><path d="M2.7,1.2 L4.3,3.4 L1.1,3.4Z" fill="#1a1a1a"/></svg>
<div class="a" style="left:101.3px;top:406.6px;width:5.4px;height:5px;background:#e4e4e4;border:1px solid #cdcdcd;border-radius:0.8px"></div>
<div class="a" style="left:101.3px;top:412.4px;width:5.4px;height:5.2px;background:#e4e4e4;border:1px solid #cdcdcd;border-radius:0.8px"></div>
<svg class="a" style="left:101.3px;top:406.6px" width="5.4" height="11" viewBox="0 0 5.4 11"><path d="M2.7,1.5 L4.3,3.6 L1.1,3.6Z M2.7,9.6 L4.3,7.4 L1.1,7.4Z" fill="#1a1a1a"/></svg>
<div class="btn" style="left:3.3px;top:216.2px;width:73.2px;height:9.0px"></div>
<div class="a" style="left:8.4px;top:219.80px;width:4.4px;height:1.8px;border-radius:0.6px;background:#3a3fc0"></div>
<div class="t" style="left:15.2px;top:218.10px">Properties (ExtractSurface</div>
<div class="btn g" style="left:78.5px;top:216.2px;width:10px;height:9.0px"></div>
<div class="btn g" style="left:90.1px;top:216.2px;width:10px;height:9.0px"></div>
<svg class="a" style="left:81.2px;top:218.2px" width="5" height="5" viewBox="0 0 5 5"><circle cx="2.5" cy="2.5" r="1.9" fill="#ededed" stroke="#b4b4b4" stroke-width="0.5"/><path d="M2.5,1.2 v1.4 h1" stroke="#b4b4b4" stroke-width="0.4" fill="none"/></svg>
<svg class="a" style="left:92.2px;top:218.0px" width="5" height="5.4" viewBox="0 0 5 5.4"><path d="M2.5,0.4 L4.4,3 L3.2,3 L3.2,4 L1.8,4 L1.8,3 L0.6,3Z" fill="#58b040"/><rect x="0.8" y="4.4" width="3.4" height="0.7" fill="#3c8a27"/></svg>
<svg class="cb" style="left:4px;top:229.1px" viewBox="0 0 4.4 4.4"><rect x="0.3" y="0.3" width="3.8" height="3.8" fill="#fbfbfb" stroke="#c4c4c4" stroke-width="0.35"/><path d="M0.8,0.8 L3.6,3.6 M3.6,0.8 L0.8,3.6" stroke="#161616" stroke-width="1.35"/></svg>
<div class="t" style="left:10.2px;top:228.8px">Piece Invariant</div>
<div class="a" style="left:1.4px;top:232.3px;width:100.4px;height:17px;background:#f0f0f0"></div>
<div class="t" style="left:3.3px;top:235.7px">Nonlinear</div>
<div class="t" style="left:3.3px;top:240.8px">Subdivision Level</div>
<div class="sl" style="left:43px;top:240.5px;width:20.3px"></div>
<div class="kn" style="left:45.7px;top:238.70000000000002px"></div>
<div class="inp" style="left:65.7px;top:238.1px;width:34.7px;height:6.8px"></div>
<div class="t" style="left:67.5px;top:238.90px">1</div>
<div class="a" style="left:1.4px;top:232.3px;width:100.4px;height:17px;border:0.9px solid #e82222"></div>
<div class="btn" style="left:3.3px;top:250px;width:73.2px;height:8.4px"></div>
<div class="a" style="left:8.4px;top:253.30px;width:4.4px;height:1.8px;border-radius:0.6px;background:#3a3fc0"></div>
<div class="t" style="left:15.2px;top:251.60px">Display (GeometryReprese</div>
<div class="btn g" style="left:78.5px;top:250px;width:10px;height:8.4px"></div>
<div class="btn g" style="left:90.1px;top:250px;width:10px;height:8.4px"></div>
<svg class="a" style="left:81.2px;top:251.7px" width="5" height="5" viewBox="0 0 5 5"><circle cx="2.5" cy="2.5" r="1.9" fill="#ededed" stroke="#b4b4b4" stroke-width="0.5"/><path d="M2.5,1.2 v1.4 h1" stroke="#b4b4b4" stroke-width="0.4" fill="none"/></svg>
<svg class="a" style="left:92.2px;top:251.5px" width="5" height="5.4" viewBox="0 0 5 5.4"><path d="M2.5,0.4 L4.4,3 L3.2,3 L3.2,4 L1.8,4 L1.8,3 L0.6,3Z" fill="#58b040"/><rect x="0.8" y="4.4" width="3.4" height="0.7" fill="#3c8a27"/></svg>
<div class="t" style="left:3.3px;top:261.2px">Representation</div>
<div class="cmb" style="left:42.7px;top:260.9px;width:58.1px;height:7.1px"><b></b><i></i></div>
<div class="t" style="left:44.7px;top:261.85px">Surface</div>
<div class="t b" style="left:3.2px;top:270.9px">Coloring</div>
<div class="ul" style="top:276px"></div>
<div class="cmb" style="left:3.2px;top:278.8px;width:64.1px;height:7.5px"><b></b><i></i></div>
<div class="a" style="left:5.6px;top:281.75px;width:1.6px;height:1.6px;border-radius:1px;background:#d64a3a"></div>
<div class="t" style="left:8.8px;top:279.95px">von_Mises_stress</div>
<div class="cmb" style="left:69.4px;top:278.8px;width:31.4px;height:7.5px;border-color:#cacaca;background:#e2e2e2"><b></b><i style="border-top-color:#999"></i></div>
<div class="btn g" style="left:3.2px;top:288.4px;width:31.3px;height:8.6px"></div>
<div class="t" style="left:16.6px;top:290.10px;color:#262626">Show</div>
<div class="a" style="left:11.2px;top:290.3px;width:2.8px;height:4.8px;background:linear-gradient(#e8281a 0,#f0e020 35%,#4cc83a 55%,#2040d8 100%)"></div>
<div class="btn g" style="left:36.4px;top:288.4px;width:30.9px;height:8.6px"></div>
<div class="t" style="left:50.8px;top:290.10px;color:#262626">Edit</div>
<svg class="a" style="left:43.6px;top:290.2px" width="6" height="5.4" viewBox="0 0 6 5.4"><circle cx="2" cy="1.8" r="1.6" fill="#a6dc8e" stroke="#6faa5a" stroke-width="0.3"/><rect x="0.4" y="3" width="1.8" height="2" fill="#2a6fd6"/><rect x="2.2" y="3" width="1.6" height="2" fill="#36b0c8"/><rect x="3.8" y="3" width="1.8" height="2" fill="#f0a028"/></svg>
<div class="btn g" style="left:69.4px;top:288.4px;width:31.4px;height:8.6px"></div>
<div class="t" style="left:80px;top:290.10px;color:#262626">Rescale</div>
<svg class="a" style="left:72.4px;top:291.4px" width="6.4" height="3.4" viewBox="0 0 6.4 3.4"><path d="M0.2,1.4 L1.6,0.2 L1.6,1 L4.8,1 L4.8,0.2 L6.2,1.4 L4.8,2.6 L4.8,1.8 L1.6,1.8 L1.6,2.6Z" fill="#5cb940" stroke="#3c8a27" stroke-width="0.2"/></svg>
<div class="t b" style="left:3.2px;top:300.0px">Scalar Coloring</div>
<div class="ul" style="top:305.3px"></div>
<svg class="cb" style="left:3.2px;top:308.9px" viewBox="0 0 4.4 4.4"><rect x="0.3" y="0.3" width="3.8" height="3.8" fill="#fbfbfb" stroke="#c4c4c4" stroke-width="0.35"/><path d="M0.8,0.8 L3.6,3.6 M3.6,0.8 L0.8,3.6" stroke="#161616" stroke-width="1.35"/></svg>
<div class="t" style="left:10px;top:308.5px">Map Scalars</div>
<svg class="cb" style="left:3.2px;top:317px" viewBox="0 0 4.4 4.4"><rect x="0.3" y="0.3" width="3.8" height="3.8" fill="#fbfbfb" stroke="#c4c4c4" stroke-width="0.35"/><path d="M0.8,0.8 L3.6,3.6 M3.6,0.8 L0.8,3.6" stroke="#161616" stroke-width="1.35"/></svg>
<div class="t" style="left:10px;top:316.7px">Interpolate Scalars Before Mapping</div>
<div class="t b" style="left:3.2px;top:325.4px">Styling</div>
<div class="ul" style="top:330.4px"></div>
<div class="t" style="left:3.2px;top:333.4px">Opacity</div>
<div class="sl" style="left:42.6px;top:335.8px;width:20.4px"></div>
<div class="kn" style="left:58.3px;top:334.0px"></div>
<div class="inp" style="left:65.3px;top:333.4px;width:35.3px;height:6.4px"></div>
<div class="t" style="left:67.1px;top:334.00px">1</div>
<div class="t" style="left:3.2px;top:341.9px">Point Size</div>
<div class="inp" style="left:42.6px;top:342.2px;width:58.0px;height:6.4px"></div>
<div class="t" style="left:44.4px;top:342.80px">2</div>
<div class="t" style="left:3.2px;top:350.4px">Line Width</div>
<div class="inp" style="left:42.6px;top:350.8px;width:58.0px;height:6.4px"></div>
<div class="t" style="left:44.4px;top:351.40px">1</div>
<div class="t b" style="left:3.2px;top:360.29999999999995px">Lighting</div>
<div class="ul" style="top:365.3px"></div>
<div class="t" style="left:3.2px;top:368px">Interpolation</div>
<div class="cmb" style="left:42.6px;top:368.4px;width:58.0px;height:6.4px"><b></b><i></i></div>
<div class="t" style="left:44.6px;top:369.00px">Gouraud</div>
<div class="t" style="left:3.2px;top:376.5px">Specular</div>
<div class="sl" style="left:42.6px;top:379.59999999999997px;width:20.4px"></div>
<div class="kn" style="left:42.5px;top:377.79999999999995px"></div>
<div class="inp" style="left:65.3px;top:377.2px;width:35.3px;height:6.4px"></div>
<div class="t" style="left:67.1px;top:377.80px">0</div>
<div class="btn" style="left:3px;top:385.1px;width:97.8px;height:8.8px;background:#f1f1f1"></div>
<div class="a" style="left:5.6px;top:386.9px;width:5.3px;height:5.3px;border-radius:50%;background:#fdfdfd;border:1px solid #7a7a7a"></div>
<div class="t" style="left:12.8px;top:387px">Specular Color</div>
<div class="t" style="left:3.2px;top:396px">Specular Power</div>
<div class="sl" style="left:42.6px;top:398.4px;width:20.4px"></div>
<div class="kn" style="left:58.3px;top:396.59999999999997px"></div>
<div class="inp" style="left:65.3px;top:396px;width:35.3px;height:6.4px"></div>
<div class="t" style="left:67.1px;top:396.60px">100</div>
<div class="t" style="left:3.2px;top:404.5px">Ambient</div>
<div class="sl" style="left:42.6px;top:407.2px;width:20.4px"></div>
<div class="kn" style="left:42.5px;top:405.4px"></div>
<div class="inp" style="left:65.3px;top:404.8px;width:35.3px;height:6.4px"></div>
<div class="t" style="left:67.1px;top:405.40px">0</div>
<div class="t" style="left:3.2px;top:413px">Diffuse</div>
<div class="sl" style="left:42.6px;top:415.59999999999997px;width:20.4px"></div>
<div class="kn" style="left:58.3px;top:413.79999999999995px"></div>
<div class="inp" style="left:65.3px;top:413.4px;width:35.3px;height:6.4px"></div>
<div class="t" style="left:67.1px;top:414.00px">1</div>
<div class="a" style="left:0;top:418.5px;width:112px;height:12.5px;background:#efefef"></div>
<div class="a" style="left:110.6px;top:59px;width:0.6px;height:372px;background:#dcdcdc"></div>
<div class="a" style="left:112px;top:66.2px;width:578px;height:0.6px;background:#b9b9b9"></div>
<div class="a" style="left:113.4px;top:59.4px;width:39px;height:7.6px;background:#f3f3f3;border:0.5px solid #a9a9a9;border-bottom:none;border-radius:1.4px 1.4px 0 0"></div>
<div class="a" style="left:153px;top:60.6px;width:12.6px;height:5.8px;background:linear-gradient(#e6e6e6,#d4d4d4);border:0.5px solid #a9a9a9;border-bottom:none;border-radius:1.2px 1.2px 0 0"></div>
<svg class="a" style="left:116.2px;top:60.8px" width="4" height="5" viewBox="0 0 4 5"><rect x="0.5" y="0.6" width="3" height="3.4" fill="#fff" stroke="#222" stroke-width="0.75"/></svg>
<div class="t" style="left:121.4px;top:60.7px">Layout #1</div>
<svg class="a" style="left:145.6px;top:61.8px" width="3.6" height="3.6" viewBox="0 0 3.6 3.6"><path d="M0.5,0.5 L3.1,3.1 M3.1,0.5 L0.5,3.1" stroke="#222" stroke-width="0.7"/></svg>
<div class="t b" style="left:157.6px;top:61px">+</div>
<svg class="a" style="left:115.0px;top:68.6px" width="5" height="5" viewBox="0 0 5 5"><path d="M0.6,4.4 L3.2,1.6" stroke="#c8442e" stroke-width="1.1"/><path d="M2.8,2 L4.4,0.5" stroke="#9a9a9a" stroke-width="1.1"/></svg>
<svg class="a" style="left:123.19999999999999px;top:68.6px" width="5" height="5" viewBox="0 0 5 5"><path d="M0.8,1 L3,3.4 M2.4,1 L4.2,4" stroke="#c4c4c4" stroke-width="0.9"/></svg>
<div class="t b" style="left:130.5px;top:68.9px;font-size:3.1px;color:#555;-webkit-text-stroke:0">3D</div>
<svg class="a" style="left:138.79999999999998px;top:68.6px" width="5" height="5" viewBox="0 0 5 5"><rect x="0.6" y="0.7" width="2.9" height="2.9" fill="none" stroke="#6e5a4a" stroke-width="0.6"/><rect x="2" y="2.1" width="2.3" height="2.3" rx="0.6" fill="#4a9a3a"/></svg>
<svg class="a" style="left:146.79999999999998px;top:68.6px" width="5" height="5" viewBox="0 0 5 5"><rect x="0.6" y="0.7" width="2.9" height="2.9" fill="none" stroke="#b4b4b4" stroke-width="0.6"/><rect x="2" y="2.1" width="2.3" height="2.3" rx="0.6" fill="#8cc87a"/></svg>
<svg class="a" style="left:154.5px;top:68.6px" width="5" height="5" viewBox="0 0 5 5"><rect x="0.6" y="0.7" width="2.9" height="2.9" fill="none" stroke="#c4c4c4" stroke-width="0.6"/><rect x="2" y="2.1" width="2.3" height="2.3" rx="0.6" fill="#d8c4a8"/></svg>
<svg class="a" style="left:162.5px;top:68.6px" width="5" height="5" viewBox="0 0 5 5"><rect x="0.6" y="0.7" width="2.9" height="2.9" fill="none" stroke="#a8b890" stroke-width="0.6"/><rect x="2" y="2.1" width="2.3" height="2.3" rx="0.6" fill="#58b040"/></svg>
<svg class="a" style="left:170.29999999999998px;top:68.6px" width="5" height="5" viewBox="0 0 5 5"><rect x="0.6" y="0.7" width="2.9" height="2.9" fill="none" stroke="#d8bcb0" stroke-width="0.6"/><rect x="2" y="2.1" width="2.3" height="2.3" rx="0.6" fill="#e0684a"/></svg>
<svg class="a" style="left:177.9px;top:68.6px" width="5" height="5" viewBox="0 0 5 5"><rect x="0.6" y="0.7" width="2.9" height="2.9" fill="none" stroke="#9a9a9a" stroke-width="0.6"/><rect x="2" y="2.1" width="2.3" height="2.3" rx="0.6" fill="#62a852"/></svg>
<svg class="a" style="left:185.9px;top:68.6px" width="5" height="5" viewBox="0 0 5 5"><rect x="0.6" y="0.7" width="2.9" height="2.9" fill="none" stroke="#9aa69a" stroke-width="0.6"/><rect x="2" y="2.1" width="2.3" height="2.3" rx="0.6" fill="#d85a3a"/></svg>
<svg class="a" style="left:194.1px;top:68.6px" width="5" height="5" viewBox="0 0 5 5"><rect x="0.6" y="0.7" width="2.9" height="2.9" fill="none" stroke="#d6d6d6" stroke-width="0.6"/><rect x="2" y="2.1" width="2.3" height="2.3" rx="0.6" fill="#c2c6b4"/></svg>
<div class="t" style="left:625px;top:68px;font-size:4.1px">RenderView1</div>
<div class="a" style="left:657px;top:67.1px;width:7.7px;height:7.6px;background:#e8e8e8;border:0.5px solid #b2b2b2;border-radius:0.8px"></div>
<svg class="a" style="left:658.6px;top:68.6px" width="4.6" height="4.6" viewBox="0 0 4.6 4.6"><path d="M0.9,1 h2.8 v2.6 h-2.8z" fill="#f4f4f4" stroke="#1c1c1c" stroke-width="0.7"/><path d="M0.9,1.9 h2.8" stroke="#1c1c1c" stroke-width="0.6"/></svg>
<div class="a" style="left:664.6px;top:67.1px;width:7.7px;height:7.6px;background:#e8e8e8;border:0.5px solid #b2b2b2;border-radius:0.8px"></div>
<svg class="a" style="left:666.2px;top:68.6px" width="4.6" height="4.6" viewBox="0 0 4.6 4.6"><path d="M1.3,0.7 h2 v3.2 h-2z" fill="#f4f4f4" stroke="#1c1c1c" stroke-width="0.7"/><path d="M2.3,0.7 v3.2" stroke="#1c1c1c" stroke-width="0.5"/></svg>
<div class="a" style="left:672.2px;top:67.1px;width:7.7px;height:7.6px;background:#e8e8e8;border:0.5px solid #b2b2b2;border-radius:0.8px"></div>
<svg class="a" style="left:673.8000000000001px;top:68.6px" width="4.6" height="4.6" viewBox="0 0 4.6 4.6"><path d="M0.7,0.8 h3.2 v3 h-3.2z" fill="#f4f4f4" stroke="#1c1c1c" stroke-width="0.8"/><path d="M0.7,1.5 h3.2 M1.6,3.8 v-0.8 h1.4 v0.8" stroke="#1c1c1c" stroke-width="0.7" fill="none"/></svg>
<div class="a" style="left:679.8px;top:67.1px;width:7.7px;height:7.6px;background:#e8e8e8;border:0.5px solid #b2b2b2;border-radius:0.8px"></div>
<svg class="a" style="left:681.4px;top:68.6px" width="4.6" height="4.6" viewBox="0 0 4.6 4.6"><path d="M0.9,0.9 L3.7,3.7 M3.7,0.9 L0.9,3.7" stroke="#1c1c1c" stroke-width="0.85"/></svg>
<div class="a" style="left:2px;top:61.7px;width:29px;height:1.8px;opacity:0.7;background:repeating-linear-gradient(90deg,#dcdcdc 0,#dcdcdc 0.7px,#f7f7f7 0.7px,#f7f7f7 1.5px)"></div>
<div class="a" style="left:69px;top:61.7px;width:27px;height:1.8px;opacity:0.7;background:repeating-linear-gradient(90deg,#dcdcdc 0,#dcdcdc 0.7px,#f7f7f7 0.7px,#f7f7f7 1.5px)"></div>
<div class="a" style="left:2px;top:184.4px;width:29px;height:1.8px;opacity:0.7;background:repeating-linear-gradient(90deg,#dcdcdc 0,#dcdcdc 0.7px,#f7f7f7 0.7px,#f7f7f7 1.5px)"></div>
<div class="a" style="left:69px;top:184.4px;width:27px;height:1.8px;opacity:0.7;background:repeating-linear-gradient(90deg,#dcdcdc 0,#dcdcdc 0.7px,#f7f7f7 0.7px,#f7f7f7 1.5px)"></div>
<svg class="a" style="left:112.3px;top:74.8px" width="577.3" height="346.2" viewBox="112.3 74.8 577.3 346.2">
<defs>
<linearGradient id="bg" x1="0" y1="0" x2="0" y2="1"><stop offset="0" stop-color="#ffffff"/><stop offset="1" stop-color="#b7b7b7"/></linearGradient>
<radialGradient id="ball" cx="0.36" cy="0.34" r="0.72"><stop offset="0" stop-color="#1422cc"/><stop offset="0.55" stop-color="#0d17be"/><stop offset="0.85" stop-color="#080ca2"/><stop offset="1" stop-color="#04067c"/></radialGradient>
<linearGradient id="pole" x1="0" y1="0" x2="1" y2="0"><stop offset="0" stop-color="#1218be"/><stop offset="0.4" stop-color="#0c10b0"/><stop offset="0.5" stop-color="#080a9a"/><stop offset="1" stop-color="#040674"/></linearGradient>
<linearGradient id="cbar" x1="0" y1="0" x2="0" y2="1"><stop offset="0" stop-color="#ff2000"/><stop offset="0.09" stop-color="#ff2800"/><stop offset="0.13" stop-color="#ff5000"/><stop offset="0.18" stop-color="#ff8800"/><stop offset="0.23" stop-color="#ffc800"/><stop offset="0.27" stop-color="#f8f000"/><stop offset="0.32" stop-color="#d0f800"/><stop offset="0.38" stop-color="#90f000"/><stop offset="0.45" stop-color="#40e800"/><stop offset="0.52" stop-color="#18e818"/><stop offset="0.58" stop-color="#00f050"/><stop offset="0.66" stop-color="#00f0a0"/><stop offset="0.72" stop-color="#00f0e0"/><stop offset="0.78" stop-color="#00d0f8"/><stop offset="0.84" stop-color="#0098f8"/><stop offset="0.9" stop-color="#0058f8"/><stop offset="0.95" stop-color="#0020ff"/><stop offset="1" stop-color="#0000ff"/></linearGradient>
<clipPath id="vp"><rect x="113.8" y="76.2" width="574.4" height="343.6"/></clipPath>
</defs>
<rect x="112.3" y="74.8" width="577.3" height="346.2" fill="url(#bg)"/>
<g clip-path="url(#vp)">
<linearGradient id="bd1" gradientUnits="userSpaceOnUse" x1="217.0" y1="0" x2="690.0" y2="0"><stop offset="0.0000" stop-color="#2042d6"/><stop offset="0.0655" stop-color="#2042d6"/><stop offset="0.0782" stop-color="#2346d3"/><stop offset="0.0867" stop-color="#2749d0"/><stop offset="0.0994" stop-color="#2750d0"/><stop offset="0.1205" stop-color="#2a79b4"/><stop offset="0.1438" stop-color="#2398b4"/><stop offset="0.1607" stop-color="#2087c9"/><stop offset="0.1966" stop-color="#1c65d0"/><stop offset="0.2389" stop-color="#1b5bc9"/><stop offset="0.3446" stop-color="#1b5bc2"/><stop offset="0.4820" stop-color="#1b58c2"/><stop offset="0.6406" stop-color="#1c5ac2"/><stop offset="0.8097" stop-color="#1b57c2"/><stop offset="1.0000" stop-color="#1b53c2"/></linearGradient>
<polygon points="221.0,137.5 290.0,155.6 690.0,274.8 690.0,283.3 291.0,159.5 222.1,140.5" fill="url(#bd1)"/>
<linearGradient id="bd2" gradientUnits="userSpaceOnUse" x1="217.0" y1="0" x2="690.0" y2="0"><stop offset="0.0000" stop-color="#1b3cd4"/><stop offset="0.0655" stop-color="#1b3cd4"/><stop offset="0.0782" stop-color="#1e40d1"/><stop offset="0.0867" stop-color="#2244cd"/><stop offset="0.0994" stop-color="#224bcd"/><stop offset="0.1205" stop-color="#2676b0"/><stop offset="0.1438" stop-color="#1e97b0"/><stop offset="0.1607" stop-color="#1b85c6"/><stop offset="0.1966" stop-color="#1761cd"/><stop offset="0.2389" stop-color="#1557c6"/><stop offset="0.3446" stop-color="#1557bf"/><stop offset="0.4820" stop-color="#1553bf"/><stop offset="0.6406" stop-color="#1756bf"/><stop offset="0.8097" stop-color="#1652bf"/><stop offset="1.0000" stop-color="#154ebf"/></linearGradient>
<polygon points="222.1,138.9 291.0,157.9 690.0,281.7 690.0,290.3 292.1,161.8 223.3,141.8" fill="url(#bd2)"/>
<linearGradient id="bd3" gradientUnits="userSpaceOnUse" x1="217.0" y1="0" x2="690.0" y2="0"><stop offset="0.0000" stop-color="#1636d2"/><stop offset="0.0655" stop-color="#1636d2"/><stop offset="0.0782" stop-color="#193ace"/><stop offset="0.0867" stop-color="#1d3ecb"/><stop offset="0.0994" stop-color="#1d46cb"/><stop offset="0.1205" stop-color="#2173ac"/><stop offset="0.1438" stop-color="#1996ac"/><stop offset="0.1607" stop-color="#1683c3"/><stop offset="0.1966" stop-color="#125ccb"/><stop offset="0.2389" stop-color="#1052c3"/><stop offset="0.3446" stop-color="#1052bb"/><stop offset="0.4820" stop-color="#104ebb"/><stop offset="0.6406" stop-color="#1251bb"/><stop offset="0.8097" stop-color="#114dbb"/><stop offset="1.0000" stop-color="#1049bb"/></linearGradient>
<polygon points="223.3,140.2 292.1,160.2 690.0,288.7 690.0,297.2 293.1,164.1 224.4,143.2" fill="url(#bd3)"/>
<linearGradient id="bd4" gradientUnits="userSpaceOnUse" x1="217.0" y1="0" x2="690.0" y2="0"><stop offset="0.0000" stop-color="#1131d0"/><stop offset="0.0655" stop-color="#1131d0"/><stop offset="0.0782" stop-color="#1435cc"/><stop offset="0.0867" stop-color="#1839c8"/><stop offset="0.0994" stop-color="#1841c8"/><stop offset="0.1205" stop-color="#1c70a8"/><stop offset="0.1438" stop-color="#1494a8"/><stop offset="0.1607" stop-color="#1180c0"/><stop offset="0.1966" stop-color="#0d58c8"/><stop offset="0.2389" stop-color="#0b4dc0"/><stop offset="0.3446" stop-color="#0b4db8"/><stop offset="0.4820" stop-color="#0b49b8"/><stop offset="0.6406" stop-color="#0d4cb8"/><stop offset="0.8097" stop-color="#0c48b8"/><stop offset="1.0000" stop-color="#0b44b8"/></linearGradient>
<polygon points="224.4,141.6 293.1,162.5 690.0,295.6 690.0,304.2 294.1,166.4 225.6,144.6" fill="url(#bd4)"/>
<linearGradient id="bd5" gradientUnits="userSpaceOnUse" x1="217.0" y1="0" x2="690.0" y2="0"><stop offset="0.0000" stop-color="#0f2ec8"/><stop offset="0.0655" stop-color="#0f2ec8"/><stop offset="0.0782" stop-color="#173db9"/><stop offset="0.0867" stop-color="#20a03b"/><stop offset="0.0994" stop-color="#2aac33"/><stop offset="0.1205" stop-color="#24a83b"/><stop offset="0.1438" stop-color="#1ba46d"/><stop offset="0.1607" stop-color="#0f949f"/><stop offset="0.1966" stop-color="#0e60ba"/><stop offset="0.2389" stop-color="#0a4ab9"/><stop offset="0.3446" stop-color="#0a4ab2"/><stop offset="0.4820" stop-color="#0a46b2"/><stop offset="0.6406" stop-color="#0b49b2"/><stop offset="0.8097" stop-color="#0b45b2"/><stop offset="1.0000" stop-color="#0a41b2"/></linearGradient>
<polygon points="225.6,143.0 294.1,164.8 690.0,302.6 690.0,311.1 295.1,168.6 226.7,145.9" fill="url(#bd5)"/>
<linearGradient id="bd6" gradientUnits="userSpaceOnUse" x1="217.0" y1="0" x2="690.0" y2="0"><stop offset="0.0000" stop-color="#0e2bc0"/><stop offset="0.0655" stop-color="#0e2bc0"/><stop offset="0.0782" stop-color="#163ab2"/><stop offset="0.0867" stop-color="#1f983a"/><stop offset="0.0994" stop-color="#28a333"/><stop offset="0.1205" stop-color="#229f3a"/><stop offset="0.1438" stop-color="#199c69"/><stop offset="0.1607" stop-color="#0e8c99"/><stop offset="0.1966" stop-color="#0e5bb2"/><stop offset="0.2389" stop-color="#0946b2"/><stop offset="0.3446" stop-color="#0946aa"/><stop offset="0.4820" stop-color="#0942aa"/><stop offset="0.6406" stop-color="#0b45aa"/><stop offset="0.8097" stop-color="#0a41aa"/><stop offset="1.0000" stop-color="#093eaa"/></linearGradient>
<polygon points="226.7,144.3 295.1,167.0 690.0,309.5 690.0,318.1 296.2,170.9 227.8,147.3" fill="url(#bd6)"/>
<linearGradient id="bd7" gradientUnits="userSpaceOnUse" x1="217.0" y1="0" x2="690.0" y2="0"><stop offset="0.0000" stop-color="#0e29b8"/><stop offset="0.0655" stop-color="#0e29b8"/><stop offset="0.0782" stop-color="#1537aa"/><stop offset="0.0867" stop-color="#1d9039"/><stop offset="0.0994" stop-color="#269a32"/><stop offset="0.1205" stop-color="#209639"/><stop offset="0.1438" stop-color="#189366"/><stop offset="0.1607" stop-color="#0e8593"/><stop offset="0.1966" stop-color="#0d56ab"/><stop offset="0.2389" stop-color="#0942aa"/><stop offset="0.3446" stop-color="#0942a3"/><stop offset="0.4820" stop-color="#093ea3"/><stop offset="0.6406" stop-color="#0a41a3"/><stop offset="0.8097" stop-color="#093ea3"/><stop offset="1.0000" stop-color="#093aa3"/></linearGradient>
<polygon points="227.8,145.7 296.2,169.3 690.0,316.5 690.0,325.0 297.2,173.2 229.0,148.7" fill="url(#bd7)"/>
<linearGradient id="bd8" gradientUnits="userSpaceOnUse" x1="217.0" y1="0" x2="690.0" y2="0"><stop offset="0.0000" stop-color="#0d27af"/><stop offset="0.0655" stop-color="#0d27af"/><stop offset="0.0782" stop-color="#1334a2"/><stop offset="0.0867" stop-color="#1b8738"/><stop offset="0.0994" stop-color="#239132"/><stop offset="0.1205" stop-color="#1f8e38"/><stop offset="0.1438" stop-color="#178a62"/><stop offset="0.1607" stop-color="#0d7d8d"/><stop offset="0.1966" stop-color="#0c51a3"/><stop offset="0.2389" stop-color="#083ea2"/><stop offset="0.3446" stop-color="#083e9c"/><stop offset="0.4820" stop-color="#083b9c"/><stop offset="0.6406" stop-color="#0a3d9c"/><stop offset="0.8097" stop-color="#093a9c"/><stop offset="1.0000" stop-color="#08379c"/></linearGradient>
<polygon points="229.0,147.1 297.2,171.6 690.0,323.4 690.0,332.0 298.2,175.5 230.1,150.0" fill="url(#bd8)"/>
<linearGradient id="bd9" gradientUnits="userSpaceOnUse" x1="217.0" y1="0" x2="690.0" y2="0"><stop offset="0.0000" stop-color="#1030d0"/><stop offset="0.0655" stop-color="#1030d0"/><stop offset="0.0782" stop-color="#1c50a8"/><stop offset="0.0867" stop-color="#2cb830"/><stop offset="0.0994" stop-color="#50c828"/><stop offset="0.1205" stop-color="#30b82c"/><stop offset="0.1438" stop-color="#1cac4c"/><stop offset="0.1607" stop-color="#0d8394"/><stop offset="0.1966" stop-color="#0d57ba"/><stop offset="0.2389" stop-color="#0d5dba"/><stop offset="0.3446" stop-color="#0a71a7"/><stop offset="0.4820" stop-color="#0a66a2"/><stop offset="0.6406" stop-color="#084da3"/><stop offset="0.8097" stop-color="#0743a0"/><stop offset="1.0000" stop-color="#07399c"/></linearGradient>
<polygon points="230.1,148.4 298.2,173.9 690.0,330.4 690.0,359.7 302.3,184.7 234.7,155.5" fill="url(#bd9)"/>
<linearGradient id="bd10" gradientUnits="userSpaceOnUse" x1="217.0" y1="0" x2="690.0" y2="0"><stop offset="0.0000" stop-color="#1030d0"/><stop offset="0.0655" stop-color="#1030d0"/><stop offset="0.0782" stop-color="#1c50a8"/><stop offset="0.0867" stop-color="#28b428"/><stop offset="0.0994" stop-color="#34b828"/><stop offset="0.1205" stop-color="#26a824"/><stop offset="0.1438" stop-color="#189434"/><stop offset="0.1607" stop-color="#0b5190"/><stop offset="0.1966" stop-color="#0b46ae"/><stop offset="0.2389" stop-color="#0b68a9"/><stop offset="0.3446" stop-color="#0b8496"/><stop offset="0.4820" stop-color="#0a7692"/><stop offset="0.6406" stop-color="#085596"/><stop offset="0.8097" stop-color="#064490"/><stop offset="1.0000" stop-color="#053389"/></linearGradient>
<polygon points="234.7,153.9 302.3,183.1 690.0,358.1 690.0,387.5 306.4,193.8 239.2,161.0" fill="url(#bd10)"/>
<linearGradient id="bd11" gradientUnits="userSpaceOnUse" x1="217.0" y1="0" x2="690.0" y2="0"><stop offset="0.0000" stop-color="#1030d0"/><stop offset="0.0655" stop-color="#1030d0"/><stop offset="0.0782" stop-color="#1c50a8"/><stop offset="0.0867" stop-color="#209c20"/><stop offset="0.0994" stop-color="#22a020"/><stop offset="0.1205" stop-color="#1c901c"/><stop offset="0.1438" stop-color="#127426"/><stop offset="0.1607" stop-color="#0a2c8c"/><stop offset="0.1966" stop-color="#0938a0"/><stop offset="0.2389" stop-color="#0a7894"/><stop offset="0.3446" stop-color="#0b8c80"/><stop offset="0.4820" stop-color="#097c80"/><stop offset="0.6406" stop-color="#075488"/><stop offset="0.8097" stop-color="#06407e"/><stop offset="1.0000" stop-color="#042c74"/></linearGradient>
<polygon points="239.2,159.4 306.4,192.2 690.0,385.9 690.0,415.3 310.6,203.0 243.8,166.4" fill="url(#bd11)"/>
<linearGradient id="bd12" gradientUnits="userSpaceOnUse" x1="217.0" y1="0" x2="690.0" y2="0"><stop offset="0.0000" stop-color="#1030d0"/><stop offset="0.0655" stop-color="#1030d0"/><stop offset="0.0782" stop-color="#167816"/><stop offset="0.0867" stop-color="#187f18"/><stop offset="0.0994" stop-color="#188418"/><stop offset="0.1205" stop-color="#167816"/><stop offset="0.1438" stop-color="#0c5428"/><stop offset="0.1607" stop-color="#0a2088"/><stop offset="0.1966" stop-color="#08358f"/><stop offset="0.2389" stop-color="#0a807f"/><stop offset="0.3446" stop-color="#09876a"/><stop offset="0.4820" stop-color="#08776b"/><stop offset="0.6406" stop-color="#064d7a"/><stop offset="0.8097" stop-color="#053a6f"/><stop offset="1.0000" stop-color="#042663"/></linearGradient>
<polygon points="243.8,164.8 310.6,201.4 690.0,413.7 690.0,443.1 314.7,212.1 248.3,171.9" fill="url(#bd12)"/>
<linearGradient id="bd13" gradientUnits="userSpaceOnUse" x1="217.0" y1="0" x2="690.0" y2="0"><stop offset="0.0000" stop-color="#1030d0"/><stop offset="0.0655" stop-color="#1030d0"/><stop offset="0.0782" stop-color="#136c13"/><stop offset="0.0867" stop-color="#136c13"/><stop offset="0.0994" stop-color="#146c12"/><stop offset="0.1205" stop-color="#146412"/><stop offset="0.1438" stop-color="#0a3c40"/><stop offset="0.1607" stop-color="#092084"/><stop offset="0.1966" stop-color="#084479"/><stop offset="0.2389" stop-color="#08705e"/><stop offset="0.3446" stop-color="#067053"/><stop offset="0.4820" stop-color="#066252"/><stop offset="0.6406" stop-color="#06466c"/><stop offset="0.8097" stop-color="#053765"/><stop offset="1.0000" stop-color="#042359"/></linearGradient>
<polygon points="248.3,170.3 314.7,210.5 690.0,441.5 690.0,470.8 318.8,221.3 252.9,177.4" fill="url(#bd13)"/>
<linearGradient id="bd14" gradientUnits="userSpaceOnUse" x1="217.0" y1="0" x2="690.0" y2="0"><stop offset="0.0000" stop-color="#1030d0"/><stop offset="0.0655" stop-color="#1030d0"/><stop offset="0.0782" stop-color="#0f5b10"/><stop offset="0.0867" stop-color="#0f5b10"/><stop offset="0.0994" stop-color="#145a10"/><stop offset="0.1205" stop-color="#1a5210"/><stop offset="0.1438" stop-color="#0a2a60"/><stop offset="0.1607" stop-color="#082077"/><stop offset="0.1966" stop-color="#085964"/><stop offset="0.2389" stop-color="#07624e"/><stop offset="0.3446" stop-color="#056247"/><stop offset="0.4820" stop-color="#05584b"/><stop offset="0.6406" stop-color="#053f5f"/><stop offset="0.8097" stop-color="#04335b"/><stop offset="1.0000" stop-color="#031f4f"/></linearGradient>
<polygon points="252.9,175.8 318.8,219.7 690.0,469.2 690.0,498.6 322.9,230.4 257.4,182.8" fill="url(#bd14)"/>
<linearGradient id="bd15" gradientUnits="userSpaceOnUse" x1="217.0" y1="0" x2="690.0" y2="0"><stop offset="0.0000" stop-color="#1030d0"/><stop offset="0.0655" stop-color="#1030d0"/><stop offset="0.0782" stop-color="#0c4010"/><stop offset="0.0867" stop-color="#0c4010"/><stop offset="0.0994" stop-color="#104410"/><stop offset="0.1205" stop-color="#0e4010"/><stop offset="0.1438" stop-color="#082060"/><stop offset="0.1607" stop-color="#082070"/><stop offset="0.1966" stop-color="#066050"/><stop offset="0.2389" stop-color="#055648"/><stop offset="0.3446" stop-color="#045641"/><stop offset="0.4820" stop-color="#044f44"/><stop offset="0.6406" stop-color="#043858"/><stop offset="0.8097" stop-color="#033054"/><stop offset="1.0000" stop-color="#021c48"/></linearGradient>
<polygon points="257.4,181.2 322.9,228.8 690.0,497.0 690.0,524.8 327.0,238.0 262.0,186.7" fill="url(#bd15)"/>
<path d="M214,142 Q217.4,137.1 221,137.3 L227,138.9 L227,147 L214,147Z" fill="#1030d0"/>
<path d="M257,166 C261,174 264.6,183 267.2,191.5" stroke="#b06a1c" stroke-width="2.4" fill="none" opacity="0.85"/>
<polygon points="218,250 237.4,250 243.95,421 224.35,421" fill="url(#pole)"/>
<path d="M243.6,149.2 A58.6,57 0 1 0 271.8,206.4 C269,196 263,178 256.5,164.5 C252.5,157.5 247.6,152.8 243.6,149.2Z" fill="url(#ball)"/>
<g fill="none" stroke="#080a98" stroke-width="1.1" stroke-linejoin="round" opacity="0.5"><path d="M184,150.1 L187,158.4 L210,158 L217.6,177.6 L204.6,198.4 L179.4,197.6 L172,179.5 L187,158.4"/><path d="M159,180.6 L172,179.5"/><path d="M210,158 L224.9,149.8 L228.7,144.5"/><path d="M224.9,149.8 L243.5,152.5 L249,165.7 L243.8,180.8 L217.6,177.6"/><path d="M249,165.7 L256.5,164.5"/><path d="M243.8,180.8 L249.8,200.4 L253.6,206.3 L238.5,224.2 L214.1,222.3 L204.6,198.4"/><path d="M253.6,206.3 L268.6,208"/><path d="M179.4,197.6 L176.4,221.4 L197.1,234.6 L214.1,222.3"/><path d="M176.4,221.4 L161.3,223.3"/><path d="M197.1,234.6 L200.9,249.6"/><path d="M238.5,224.2 L244.2,242"/></g>
</g>
<g stroke-linecap="round"><path d="M156.4,376.6 L156.4,358" stroke="#e8c020" stroke-width="0.7"/><path d="M156.4,354.4 L158,358.6 L154.8,358.6Z" fill="#f0c800"/><path d="M156.4,376.6 L173,375.8" stroke="#e03a2a" stroke-width="0.7"/><path d="M177,375.6 L172.8,374 L172.8,377.4Z" fill="#c82a1a"/><rect x="172.2" y="374" width="1.6" height="3.4" fill="#3a2a1a"/><path d="M156.4,376.6 L162,380" stroke="#30a030" stroke-width="0.8"/><circle cx="163.2" cy="380.8" r="1.9" fill="#1f9a2a"/></g>
<g font-family="Liberation Sans,Arial,sans-serif" font-size="4.6" fill="#ffffff"><text x="158.6" y="357.6">Y</text><text x="176" y="373.6">X</text><text x="165.6" y="379.6">Z</text></g>
<rect x="604.8" y="174.8" width="11" height="211.2" fill="url(#cbar)"/>
<path d="M612,174.80 h9.4 M616,179.02 h5.4 M616,183.25 h5.4 M616,187.47 h5.4 M616,191.70 h5.4 M616,195.92 h5.4 M616,200.14 h5.4 M616,204.37 h5.4 M616,208.59 h5.4 M616,212.82 h5.4 M612,217.04 h9.4 M616,221.26 h5.4 M616,225.49 h5.4 M616,229.71 h5.4 M616,233.94 h5.4 M616,238.16 h5.4 M616,242.38 h5.4 M616,246.61 h5.4 M616,250.83 h5.4 M616,255.06 h5.4 M612,259.28 h9.4 M616,263.50 h5.4 M616,267.73 h5.4 M616,271.95 h5.4 M616,276.18 h5.4 M616,280.40 h5.4 M616,284.62 h5.4 M616,288.85 h5.4 M616,293.07 h5.4 M616,297.30 h5.4 M612,301.52 h9.4 M616,305.74 h5.4 M616,309.97 h5.4 M616,314.19 h5.4 M616,318.42 h5.4 M616,322.64 h5.4 M616,326.86 h5.4 M616,331.09 h5.4 M616,335.31 h5.4 M616,339.54 h5.4 M612,343.76 h9.4 M616,347.98 h5.4 M616,352.21 h5.4 M616,356.43 h5.4 M616,360.66 h5.4 M616,364.88 h5.4 M616,369.10 h5.4 M616,373.33 h5.4 M616,377.55 h5.4 M616,381.78 h5.4 M612,386.00 h9.4" stroke="#000" stroke-opacity="0.42" stroke-width="0.55" fill="none"/>
<g font-family="Liberation Sans,Arial,sans-serif" paint-order="stroke" stroke="#e4e4e4" stroke-opacity="0.62" stroke-width="1" stroke-linejoin="round">
<text x="568.2" y="167.8" font-size="11.85" fill="#141414" text-anchor="start">vonMises stress</text>
<text x="622.4" y="178" font-size="10.9" fill="#141414" text-anchor="start">1.72e+08</text>
<text x="622.4" y="217.8" font-size="10.9" fill="#141414" text-anchor="start">1.4e+8</text>
<text x="622.4" y="260.6" font-size="10.9" fill="#141414" text-anchor="start">1e+8</text>
<text x="622.4" y="303.8" font-size="10.9" fill="#141414" text-anchor="start">7e+7</text>
<text x="622.4" y="347.4" font-size="10.9" fill="#141414" text-anchor="start">3.5e+7</text>
<text x="622.4" y="390" font-size="10.9" fill="#141414" text-anchor="start">0.00e+00</text>
</g>
<rect x="113.1" y="75.5" width="575.8" height="344.8" fill="none" stroke="#3f3ff4" stroke-width="1.5"/>
</svg>
<div class="a" style="left:345.6px;top:422.3px;width:7.2px;height:7.5px;border:0.5px solid #a6a6a6;background:#f9f9f9"></div>
<svg class="a" style="left:347.4px;top:424.2px" width="3.6" height="3.6" viewBox="0 0 3.6 3.6"><path d="M0.5,0.5 L3.1,3.1 M3.1,0.5 L0.5,3.1" stroke="#8c8c8c" stroke-width="0.7"/></svg>
<div class="a" style="left:353.6px;top:422.2px;width:334px;height:7.8px;border:0.6px solid #a9a9a9;border-radius:1px;background:#efefef;box-shadow:inset -0.5px -0.5px 0 #fff"></div>
</div></body></html>
